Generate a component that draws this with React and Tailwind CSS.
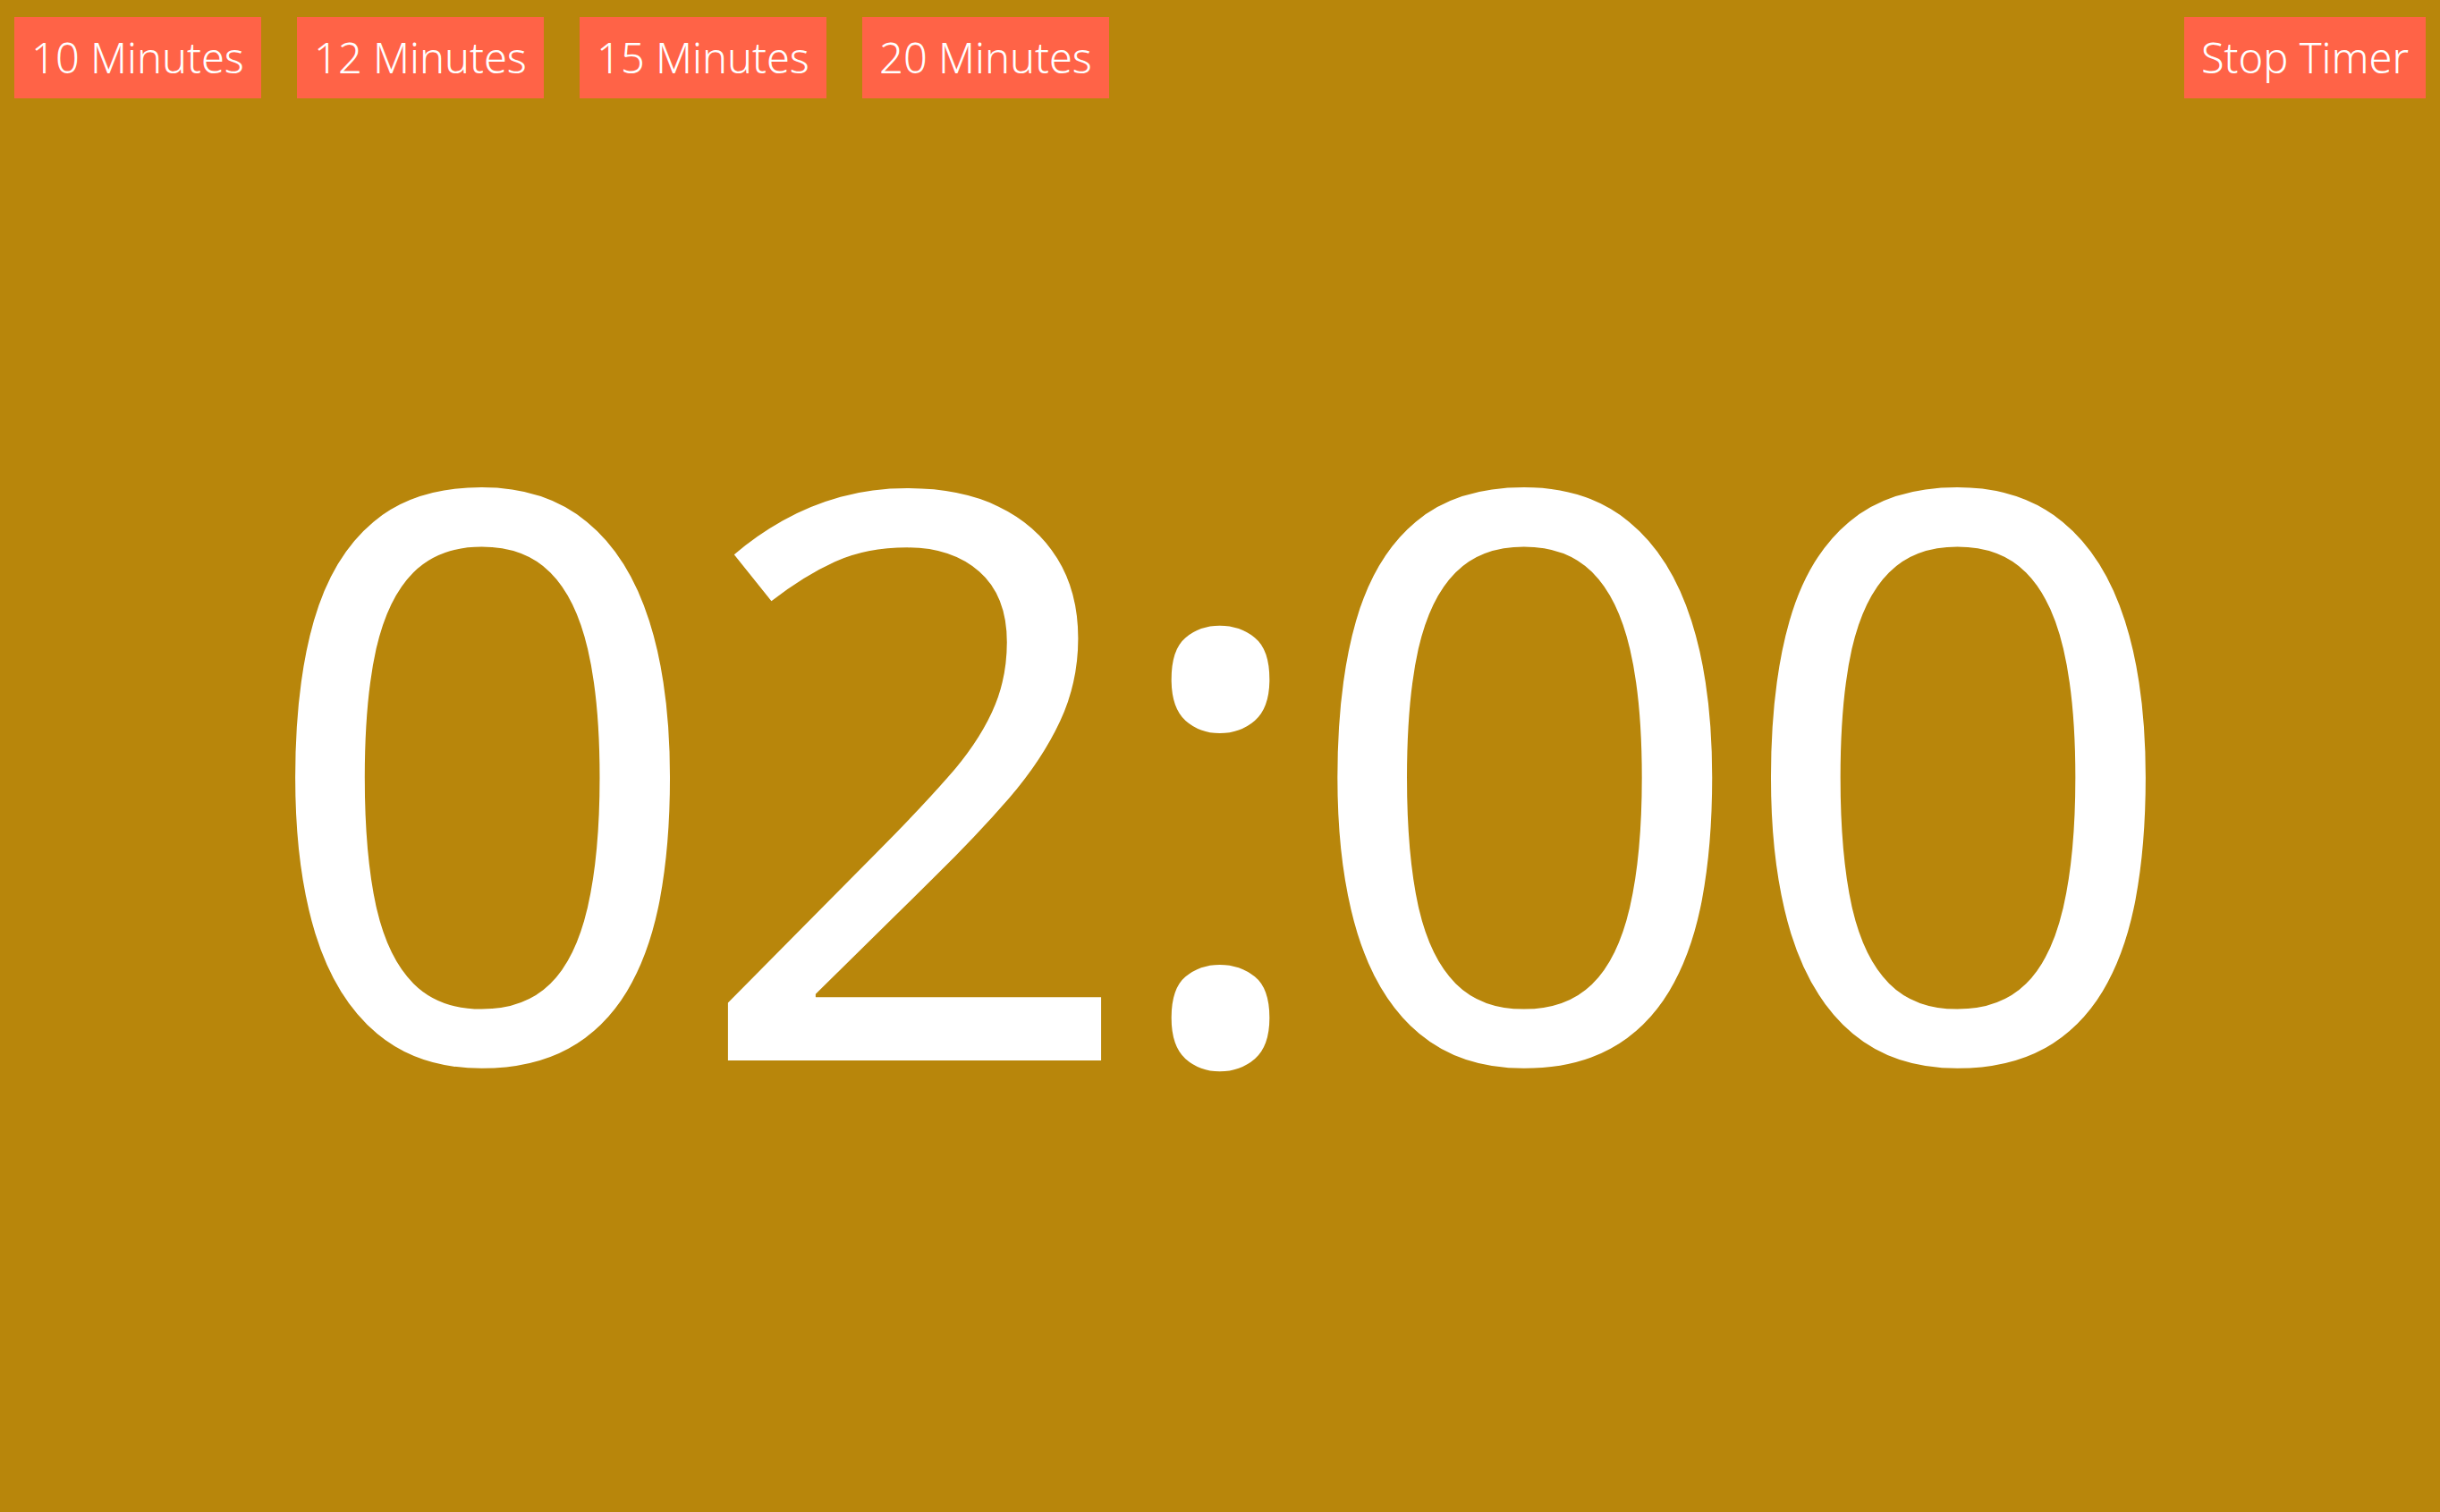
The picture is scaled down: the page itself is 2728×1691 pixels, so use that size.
export default function App() {
  const presets = ["10 Minutes", "12 Minutes", "15 Minutes", "20 Minutes"];
  return (
    <div className="h-screen w-full overflow-hidden bg-[#B8860B] text-white" style={{ fontFamily: '"Noto Sans", "Open Sans", sans-serif' }}>
      <div className="flex items-start justify-between pl-4 pr-4 pt-[19px]">
        <div className="flex gap-10">
          {presets.map((p) => (
            <button key={p} className="flex h-[91px] w-[276px] items-center justify-center bg-[#FF6347] text-[47px] font-light leading-none text-white">
              {p}
            </button>
          ))}
        </div>
        <button className="flex h-[91px] w-[270px] items-center justify-center bg-[#FF6347] text-[47px] font-light leading-none text-white">
          Stop Timer
        </button>
      </div>
      <div className="mt-[291px] flex justify-center pr-[20px]">
        <div className="text-[884px] font-normal leading-none tracking-[-21px]">
          02<span className="-mx-[10px]">:</span>00
        </div>
      </div>
    </div>
  );
}
